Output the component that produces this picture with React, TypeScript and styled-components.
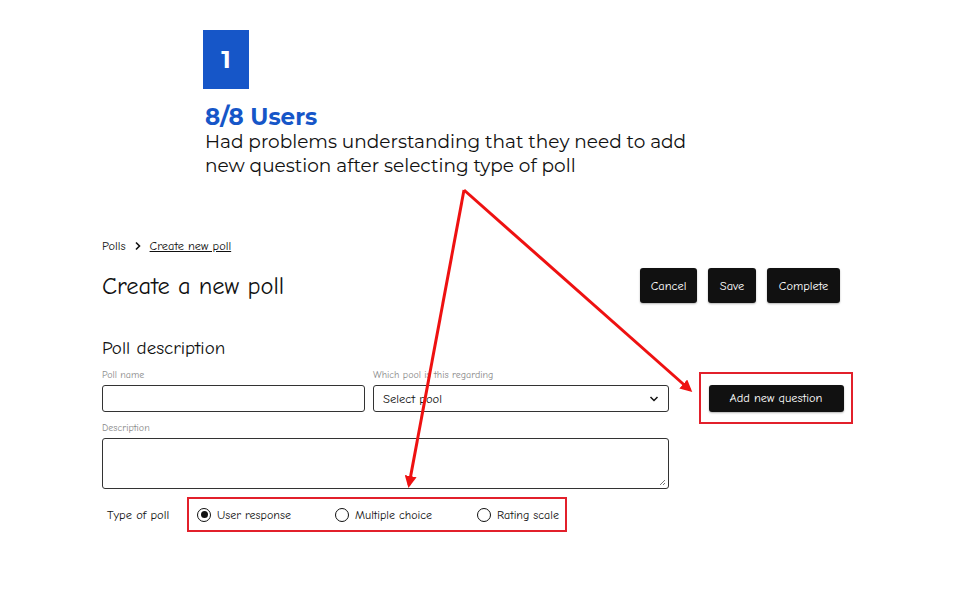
import React from "react";
import styled, { createGlobalStyle } from "styled-components";

const Global = createGlobalStyle`
  html, body { margin: 0; padding: 0; background: #fff; }
  body { width: 974px; height: 590px; overflow: hidden; }
  * { box-sizing: border-box; }
`;

const WF = `"Comic Sans MS", "Comic Neue", "Noto Sans", sans-serif`;
const HF = `Montserrat, "DejaVu Sans", sans-serif`;

const Page = styled.div`
  position: relative;
  width: 974px;
  height: 590px;
`;

const Annotation = styled.div`
  padding: 30px 0 0 203px;
  font-family: ${HF};
`;

const Badge = styled.div`
  width: 46px;
  height: 59px;
  background: #1656c8;
  color: #fff;
  font-weight: 700;
  font-size: 24px;
  display: flex;
  align-items: center;
  justify-content: center;
`;

const Finding = styled.div`
  margin-top: 15px;
  padding-left: 2px;
  color: #1656c8;
  font-weight: 700;
  font-size: 23px;
  line-height: 26px;
`;

const Note = styled.div`
  padding-left: 2px;
  color: #111;
  font-size: 18.5px;
  line-height: 24px;
  width: 505px;
`;

const Wire = styled.div`
  padding: 60px 0 0 102px;
  width: 853px;
  box-sizing: content-box;
  font-family: ${WF};
  color: #111;
`;

const Crumbs = styled.div`
  display: flex;
  align-items: center;
  gap: 8px;
  font-size: 12.4px;
  height: 16px;
`;

const CrumbLink = styled.span`
  text-decoration: underline;
`;

const HeaderRow = styled.div`
  margin-top: 14px;
  display: flex;
  align-items: center;
  justify-content: space-between;
  width: 738px;
`;

const Title = styled.h1`
  margin: 0;
  font-weight: 400;
  font-size: 24.5px;
`;

const Actions = styled.div`
  display: flex;
  gap: 11px;
`;

const DarkButton = styled.button<{ $w: number; $h?: number }>`
  width: ${(p) => p.$w}px;
  height: ${(p) => p.$h ?? 35}px;
  background: #111;
  color: #fff;
  border: none;
  border-radius: 3px;
  font-family: ${WF};
  font-size: 12.4px;
  box-shadow: 0 1px 2px rgba(0, 0, 0, 0.3);
  padding: 0;
`;

const SectionTitle = styled.h2`
  margin: 33px 0 0;
  font-weight: 400;
  font-size: 19px;
  line-height: 24px;
`;

const FormGrid = styled.div`
  margin-top: 9px;
  display: grid;
  grid-template-columns: 263px 296px 184px;
  column-gap: 8px;
  align-items: end;
`;

const Field = styled.div`
  display: flex;
  flex-direction: column;
`;

const Label = styled.label`
  font-size: 10px;
  color: #888;
  line-height: 13px;
  margin-bottom: 3px;
`;

const Box = styled.div<{ $h: number }>`
  position: relative;
  height: ${(p) => p.$h}px;
  border: 1.5px solid #333;
  border-radius: 3px;
  display: flex;
  align-items: center;
  padding: 0 9px;
  font-size: 12.6px;
  justify-content: space-between;
`;

const AddWrap = styled.div`
  width: 154px;
  height: 52px;
  margin-left: 22px;
  margin-bottom: -12px;
  border: 2.5px solid #e2202b;
  display: flex;
  align-items: center;
  justify-content: center;
`;

const DescField = styled(Field)`
  grid-column: 1 / span 2;
  margin-top: 10px;
`;

const Grip = styled.svg`
  position: absolute;
  right: 2px;
  bottom: 2px;
`;

const TypeRow = styled.div`
  margin-top: 8px;
  display: flex;
  align-items: center;
  font-size: 12.5px;
`;

const TypeLabel = styled.span`
  width: 85px;
  padding-left: 5px;
`;

const RadioBox = styled.div`
  width: 380px;
  height: 35px;
  border: 2.5px solid #e2202b;
  display: flex;
  align-items: center;
  padding-left: 8px;
`;

const Option = styled.div<{ $w: number }>`
  width: ${(p) => p.$w}px;
  display: flex;
  align-items: center;
  gap: 6px;
  font-size: 12px;
`;

const Radio = styled.span<{ $on?: boolean }>`
  width: 14px;
  height: 14px;
  border: 1.5px solid #111;
  border-radius: 50%;
  display: flex;
  align-items: center;
  justify-content: center;
  &::after {
    content: "";
    width: 7px;
    height: 7px;
    border-radius: 50%;
    background: ${(p) => (p.$on ? "#111" : "transparent")};
  }
`;

const Arrows = styled.svg`
  position: absolute;
  left: 0;
  top: 0;
  pointer-events: none;
`;

export default function App() {
  return (
    <Page>
      <Global />
      <Annotation>
        <Badge>1</Badge>
        <Finding>8/8 Users</Finding>
        <Note>
          Had problems understanding that they need to add new question after selecting type of poll
        </Note>
      </Annotation>
      <Wire>
        <Crumbs>
          <span>Polls</span>
          <svg width="8" height="10" viewBox="0 0 8 10">
            <path d="M2 1.5 L5.5 5 L2 8.5" fill="none" stroke="#111" strokeWidth="1.6" />
          </svg>
          <CrumbLink>Create new poll</CrumbLink>
        </Crumbs>
        <HeaderRow>
          <Title>Create a new poll</Title>
          <Actions>
            <DarkButton $w={57}>Cancel</DarkButton>
            <DarkButton $w={48}>Save</DarkButton>
            <DarkButton $w={73}>Complete</DarkButton>
          </Actions>
        </HeaderRow>
        <SectionTitle>Poll description</SectionTitle>
        <FormGrid>
          <Field>
            <Label>Poll name</Label>
            <Box $h={27} />
          </Field>
          <Field>
            <Label>Which pool is this regarding</Label>
            <Box $h={27}>
              <span>Select pool</span>
              <svg width="10" height="8" viewBox="0 0 10 8">
                <path d="M1.5 2 L5 5.5 L8.5 2" fill="none" stroke="#111" strokeWidth="1.5" />
              </svg>
            </Box>
          </Field>
          <AddWrap>
            <DarkButton $w={135} $h={27}>Add new question</DarkButton>
          </AddWrap>
          <DescField>
            <Label>Description</Label>
            <Box $h={51}>
              <Grip width="7" height="7" viewBox="0 0 7 7">
                <path d="M6 1 L1 6 M6 4 L4 6" stroke="#777" strokeWidth="1" />
              </Grip>
            </Box>
          </DescField>
        </FormGrid>
        <TypeRow>
          <TypeLabel>Type of poll</TypeLabel>
          <RadioBox>
            <Option $w={138}>
              <Radio $on />
              User response
            </Option>
            <Option $w={142}>
              <Radio />
              Multiple choice
            </Option>
            <Option $w={84}>
              <Radio />
              Rating scale
            </Option>
          </RadioBox>
        </TypeRow>
      </Wire>
      <Arrows width="974" height="590" viewBox="0 0 974 590">
        <defs>
          <marker id="ah" markerWidth="4" markerHeight="4" refX="3" refY="2" orient="auto" markerUnits="strokeWidth">
            <path d="M0 0 L4 2 L0 4 Z" fill="#ee1111" />
          </marker>
        </defs>
        <path d="M464 190 L690 390" stroke="#ee1111" strokeWidth="3" fill="none" markerEnd="url(#ah)" />
        <path d="M464 190 L409 485" stroke="#ee1111" strokeWidth="3" fill="none" markerEnd="url(#ah)" />
      </Arrows>
    </Page>
  );
}
